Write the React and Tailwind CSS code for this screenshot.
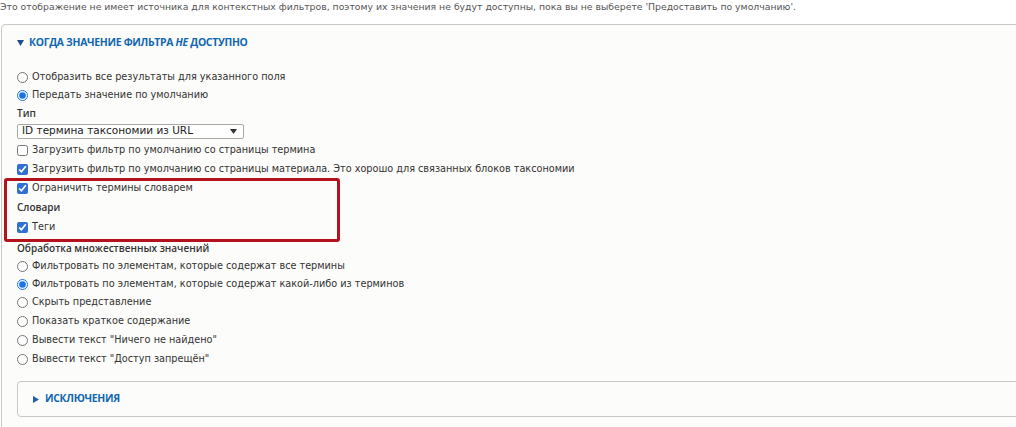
import React from 'react';

const body = "font-['DejaVu_Sans',Verdana,sans-serif] text-[9.7px] text-[#333]";
const head = "font-['Open_Sans',sans-serif] text-[10px] font-semibold text-[#333]";

function Tri({ down }) {
  return down ? (
    <svg width="7" height="6" viewBox="0 0 7 6" className="shrink-0">
      <path d="M0 0h7L3.5 6z" fill="#1f4f8a" />
    </svg>
  ) : (
    <svg width="6" height="7" viewBox="0 0 6 7" className="shrink-0">
      <path d="M0 0v7l6-3.5z" fill="#1f5fa8" />
    </svg>
  );
}

function Radio({ h, name, checked, children }) {
  return (
    <label className={`flex items-center ${h}`}>
      <input type="radio" name={name} defaultChecked={checked} className="m-0 mr-[4px] w-[11px] h-[11px] accent-[#1a73e8]" />
      <span className={body}>{children}</span>
    </label>
  );
}

function Check({ h, checked, children }) {
  return (
    <label className={`flex items-center ${h}`}>
      <input type="checkbox" defaultChecked={checked} className="m-0 mr-[4px] w-[11px] h-[11px] accent-[#2f6fd6]" />
      <span className={body}>{children}</span>
    </label>
  );
}

export default function App() {
  return (
    <div className="w-[1016px] h-[427px] overflow-hidden bg-white">
      <p className="h-[14px] leading-[14px] font-['DejaVu_Sans',Verdana,sans-serif] text-[9.3px] text-[#555]">
        Это отображение не имеет источника для контекстных фильтров, поэтому их значения не будут доступны, пока вы не выберете 'Предоставить по умолчанию'.
      </p>
      <div className="mt-[10px] ml-px w-[1100px] h-[500px] border border-[#c8c8c8] rounded-tl-[4px] bg-[#fcfcfa]">
        <div className="h-[35px] flex items-center gap-[5px] pl-[15px]">
          <Tri down />
          <span className="font-['Open_Sans',sans-serif] text-[10.4px] font-bold text-[#0f67b1] uppercase tracking-[-0.3px]">
            Когда значение фильтра <em>не</em> доступно
          </span>
        </div>

        <div className="pl-[15px] mt-[9px] flex flex-col">
          <Radio h="h-[17px]" name="a">Отобразить все результаты для указанного поля</Radio>
          <Radio h="h-[18px]" name="a" checked>Передать значение по умолчанию</Radio>
          <div className={`h-[18px] flex items-center ${head}`}>Тип</div>
          <div className="h-[18px] flex items-center">
            <div className="w-[227px] h-[15px] border border-[#a8a8a8] rounded-[2px] bg-white flex items-center justify-between pl-[4px] pr-[6px]">
              <span className="font-['DejaVu_Sans',sans-serif] text-[10.5px] text-[#222]">ID термина таксономии из URL</span>
              <svg width="7" height="5" viewBox="0 0 7 5"><path d="M0 0h7L3.5 5z" fill="#333" /></svg>
            </div>
          </div>
          <Check h="h-[20px]">Загрузить фильтр по умолчанию со страницы термина</Check>
          <Check h="h-[19px]" checked>Загрузить фильтр по умолчанию со страницы материала. Это хорошо для связанных блоков таксономии</Check>

          <div className="relative flex flex-col">
            <div className="absolute -left-[13px] -top-[1px] -bottom-[4px] w-[336px] border-[3px] border-[#b3121c] rounded-[3px]" />
            <Check h="h-[19px]" checked>Ограничить термины словарем</Check>
            <div className={`h-[19px] flex items-center ${head}`}>Словари</div>
            <Check h="h-[21px]" checked>Теги</Check>
          </div>

          <div className={`h-[20px] flex items-center ${head}`}>Обработка множественных значений</div>
          <Radio h="h-[17px]" name="b">Фильтровать по элементам, которые содержат все термины</Radio>
          <Radio h="h-[18px]" name="b" checked>Фильтровать по элементам, которые содержат какой-либо из терминов</Radio>
          <Radio h="h-[19px]" name="c">Скрыть представление</Radio>
          <Radio h="h-[19px]" name="c">Показать краткое содержание</Radio>
          <Radio h="h-[19px]" name="c">Вывести текст "Ничего не найдено"</Radio>
          <Radio h="h-[18px]" name="c">Вывести текст "Доступ запрещён"</Radio>

          <div className="mt-[13px] h-[36px] border border-[#c8c8c8] rounded-l-[4px] bg-[#fcfcfa] flex items-center gap-[6px] pl-[15px]">
            <Tri />
            <span className="font-['Open_Sans',sans-serif] text-[10.4px] font-bold text-[#0f67b1] uppercase tracking-[-0.3px]">Исключения</span>
          </div>
        </div>
      </div>
    </div>
  );
}
